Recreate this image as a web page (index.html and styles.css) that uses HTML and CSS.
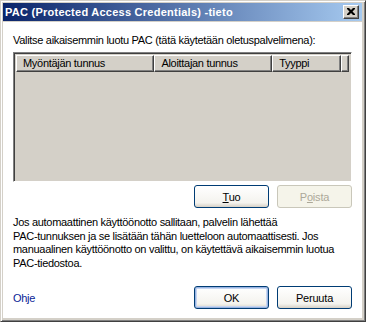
FILE: index.html
```html
<!DOCTYPE html>
<html lang="fi">
<head>
    <meta charset="UTF-8">
    <title>PAC (Protected Access Credentials) -tieto</title>
    <link rel="stylesheet" href="styles.css">
</head>
<body>
    <div class="window">
        <div class="titlebar">
            <span class="title">PAC (Protected Access Credentials) -tieto</span>
            <span class="close">
                <svg width="8" height="7" viewBox="0 0 8 7">
                    <path d="M0 0h2l2 2 2-2h2v1l-2.5 2.5 2.5 2.5v1h-2l-2-2-2 2h-2v-1l2.5-2.5-2.5-2.5z" fill="#000"/>
                </svg>
            </span>
        </div>
        <div class="client">
            <p class="label">Valitse aikaisemmin luotu PAC (tätä käytetään oletuspalvelimena):</p>
            <div class="list">
                <div class="listHead">
                    <span class="col c1">Myöntäjän tunnus</span>
                    <span class="col c2">Aloittajan tunnus</span>
                    <span class="col c3">Tyyppi</span>
                    <span class="col c4"></span>
                </div>
                <div class="listBody"></div>
            </div>
            <div class="btnRow">
                <button class="btn"><u>T</u>uo</button>
                <button class="btn" disabled>P<u>o</u>ista</button>
            </div>
            <p class="info">Jos automaattinen käyttöönotto sallitaan, palvelin lähettää<br>
                PAC-tunnuksen ja se lisätään tähän luetteloon automaattisesti. Jos<br>
                manuaalinen käyttöönotto on valittu, on käytettävä aikaisemmin luotua<br>
                PAC-tiedostoa.</p>
            <div class="footer">
                <a href="#" class="help">Ohje</a>
                <div class="btnRow">
                    <button class="btn default">OK</button>
                    <button class="btn">Peruuta</button>
                </div>
            </div>
        </div>
    </div>
</body>
</html>
```

FILE: styles.css
```css
html,body{
    margin: 0;
    padding: 0;
}
body{
    font-family: "Liberation Sans", Arial, sans-serif;
    font-size: 11px;
    color: #000;
    width: 366px;
    height: 322px;
    overflow: hidden;
}
.window{
    box-sizing: border-box;
    width: 366px;
    height: 322px;
    background: #d4d0c8;
    border-top: 1px solid #d4d0c8;
    border-left: 1px solid #d4d0c8;
    border-right: 1px solid #404040;
    border-bottom: 1px solid #404040;
    box-shadow: inset 1px 1px 0 #fff, inset -1px -1px 0 #808080;
    padding: 2px 3px 3px 2px;
    display: flex;
    flex-direction: column;
}
.titlebar{
    height: 18px;
    flex: none;
    background: linear-gradient(to right, #0a246a, #a6caf0);
    display: flex;
    align-items: center;
    justify-content: space-between;
    padding: 0 3px 0 2px;
}
.title{
    color: #fff;
    font-weight: bold;
    font-size: 11px;
    letter-spacing: 0.25px;
}
.close{
    box-sizing: border-box;
    width: 16px;
    height: 14px;
    background: #d4d0c8;
    border-top: 1px solid #fff;
    border-left: 1px solid #fff;
    border-right: 1px solid #404040;
    border-bottom: 1px solid #404040;
    box-shadow: inset -1px -1px 0 #808080;
    display: flex;
    align-items: center;
    justify-content: center;
    padding: 0 1px 1px 0;
}
.client{
    flex: 1;
    margin-top: 1px;
    background: #fff;
    padding: 0 9px 0 10px;
    display: flex;
    flex-direction: column;
    letter-spacing: -0.3px;
}
.label{
    margin: 12px 0 0;
    line-height: 13px;
}
.list{
    margin-top: 5px;
    height: 130px;
    box-sizing: border-box;
    border-top: 1px solid #808080;
    border-left: 1px solid #808080;
    border-right: 1px solid #fff;
    border-bottom: 1px solid #fff;
    box-shadow: inset 1px 1px 0 #404040, inset -1px -1px 0 #d4d0c8;
    padding: 2px;
    background: #d4d0c8;
    display: flex;
    flex-direction: column;
    width: 339px;
}
.listHead{
    display: flex;
    height: 17px;
    flex: none;
}
.col{
    box-sizing: border-box;
    height: 17px;
    line-height: 15px;
    padding-left: 6px;
    background: #d4d0c8;
    border-top: 1px solid #fff;
    border-left: 1px solid #fff;
    border-right: 1px solid #404040;
    border-bottom: 1px solid #404040;
    box-shadow: inset -1px -1px 0 #808080;
    white-space: nowrap;
    overflow: hidden;
}
.c1{ width: 141px; }
.c2{ width: 120px; }
.c3{ width: 70px; }
.c4{ flex: 1; }
.listBody{
    flex: 1;
}
.btnRow{
    display: flex;
    justify-content: flex-end;
    gap: 8px;
}
.client > .btnRow{
    margin-top: 3px;
    padding-right: 1px;
}
.btn{
    box-sizing: border-box;
    width: 75px;
    height: 23px;
    font-family: "Liberation Sans", Arial, sans-serif;
    font-size: 11px;
    letter-spacing: -0.2px;
    color: #000;
    border: 1px solid #003c74;
    border-radius: 3px;
    background: linear-gradient(#fff, #f4f3ee 80%, #d6d0c5);
    padding: 0;
}
.btn[disabled]{
    color: #aca899;
    border-color: #c9c7ba;
    background: #f5f4ea;
}
.btn.default{
    box-shadow: inset 0 0 0 1px #98b4e2, inset 0 0 0 2px #c6d5f0;
}
.info{
    margin: 8px 0 0;
    line-height: 13.5px;
    white-space: nowrap;
}
.footer{
    margin-top: auto;
    margin-bottom: 9px;
    display: flex;
    align-items: center;
    justify-content: space-between;
    padding-right: 1px;
}
.help{
    color: #0a1e96;
    text-decoration: none;
}
```
